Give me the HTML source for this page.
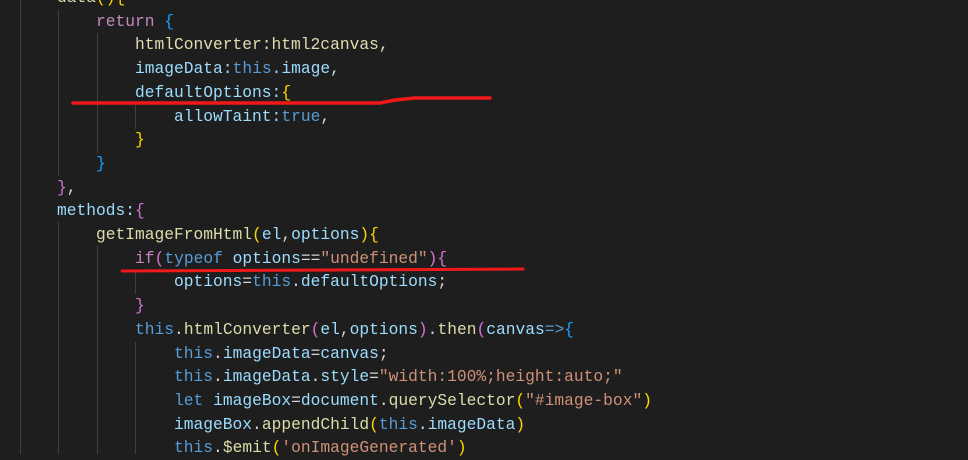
<!DOCTYPE html>
<html><head><meta charset="utf-8"><style>
body{margin:0;width:968px;height:454px;background:#1e1e1e;overflow:hidden;position:relative}
.c{position:absolute;left:18px;top:-14px;font-family:"Liberation Mono",monospace;font-size:16.25px;line-height:23.7px;color:#d4d4d4;white-space:pre}
.g{position:absolute;width:1px;background:#404040}
.k{color:#c586c0}.b{color:#569cd6}.v{color:#9cdcfe}.f{color:#dcdcaa}.s{color:#ce9178}
.y{color:#ffd700}.o{color:#da70d6}.l{color:#179fff}.w{color:#e0ddb0}
</style></head><body>
<div class="g" style="left:20px;top:0;height:454px"></div>
<div class="g" style="left:58px;top:10px;height:166px"></div>
<div class="g" style="left:97px;top:33px;height:120px"></div>
<div class="g" style="left:135px;top:105px;height:24px"></div>
<div class="g" style="left:58px;top:222px;height:232px"></div>
<div class="g" style="left:97px;top:246px;height:208px"></div>
<div class="g" style="left:135px;top:270px;height:24px"></div>
<div class="g" style="left:135px;top:342px;height:112px"></div>
<div class="c">    <span class="f">data</span><span class="y">()</span><span class="y">{</span>
        <span class="k">return</span> <span class="l">{</span>
            <span class="w">htmlConverter:html2canvas,</span>
            <span class="v">imageData:</span><span class="b">this</span><span class="v">.image</span>,
            <span class="v">defaultOptions:</span><span class="y">{</span>
                <span class="v">allowTaint:</span><span class="b">true</span>,
            <span class="y">}</span>
        <span class="l">}</span>
    <span class="o">}</span>,
    <span class="v">methods:</span><span class="o">{</span>
        <span class="f">getImageFromHtml</span><span class="y">(</span><span class="v">el</span>,<span class="v">options</span><span class="y">)</span><span class="y">{</span>
            <span class="k">if</span><span class="o">(</span><span class="b">typeof</span> <span class="v">options</span>==<span class="s">"undefined"</span><span class="o">)</span><span class="o">{</span>
                <span class="v">options</span>=<span class="b">this</span>.<span class="v">defaultOptions</span>;
            <span class="o">}</span>
            <span class="b">this</span>.<span class="f">htmlConverter</span><span class="o">(</span><span class="v">el</span>,<span class="v">options</span><span class="o">)</span>.<span class="f">then</span><span class="o">(</span><span class="v">canvas</span><span class="b">=&gt;</span><span class="l">{</span>
                <span class="b">this</span>.<span class="v">imageData</span>=<span class="v">canvas</span>;
                <span class="b">this</span>.<span class="v">imageData</span>.<span class="v">style</span>=<span class="s">"width:100%;height:auto;"</span>
                <span class="b">let</span> <span class="v">imageBox</span>=<span class="v">document</span>.<span class="f">querySelector</span><span class="y">(</span><span class="s">"#image-box"</span><span class="y">)</span>
                <span class="v">imageBox</span>.<span class="f">appendChild</span><span class="y">(</span><span class="b">this</span>.<span class="v">imageData</span><span class="y">)</span>
                <span class="b">this</span>.<span class="f">$emit</span><span class="y">(</span><span class="s">'onImageGenerated'</span><span class="y">)</span></div>
<svg style="position:absolute;left:0;top:0" width="968" height="454">
<path d="M73 103 L380 103 L395 100 L415 98 L490 98" stroke="#f01818" stroke-width="3.5" fill="none" stroke-linecap="round"/>
<path d="M122 271 L330 270 L523 269" stroke="#f01818" stroke-width="3" fill="none" stroke-linecap="round"/>
</svg>
</body></html>
